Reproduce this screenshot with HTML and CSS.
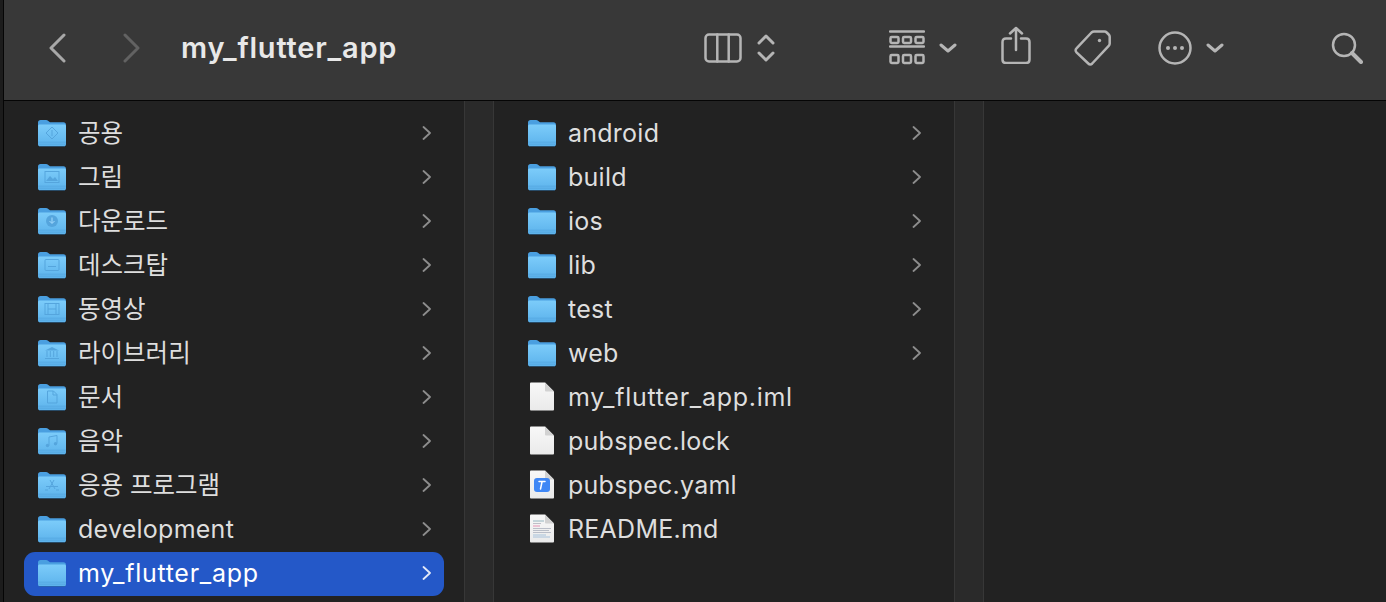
FILE: index.html
```html
<!DOCTYPE html>
<html lang="ko">
<head>
<meta charset="utf-8">
<title>my_flutter_app</title>
<link rel="stylesheet" href="styles.css">
</head>
<body>
<svg class="defs" width="0" height="0" aria-hidden="true">
  <defs>
    <linearGradient id="fb" x1="0" y1="0" x2="0" y2="1"><stop offset="0" stop-color="#7cccfa"/><stop offset="1" stop-color="#5db3ec"/></linearGradient>
    <linearGradient id="pg" x1="0" y1="0" x2="0" y2="1"><stop offset="0" stop-color="#f8f8f8"/><stop offset="1" stop-color="#eaeaea"/></linearGradient>
    <symbol id="folder" viewBox="0 0 28 28">
      <path d="M0 3.500C0 2 1 1 2.500 1H8c1 0 1.600.3 2.300.9L12 3.200h13.500C27 3.200 28 4.200 28 5.700V10H0z" fill="#4a9fe0"/>
      <path d="M0 7c0-1 .8-1.600 1.800-1.600h24.400C27.200 5.400 28 6 28 7v18.500c0 1-.8 1.500-1.800 1.500H1.800C.8 27 0 26.500 0 25.500z" fill="url(#fb)"/>
      <path d="M0 23.200h28M0 25.200h28" stroke="#4e9fd9" stroke-width=".7" opacity=".7"/>
      <path d="M1 27.400h26" stroke="#2f6d9e" stroke-width=".8" opacity=".8"/>
    </symbol>
    <symbol id="page" viewBox="0 0 28 30">
      <path d="M3.200.5C2.500.5 2 1 2 1.800v25.400c0 .8.5 1.300 1.200 1.300h21.600c.7 0 1.200-.5 1.200-1.300V9.500l-9-9z" fill="url(#pg)"/>
      <path d="M17 .5v7.700c0 .8.500 1.300 1.300 1.300H26z" fill="#d2d2d2"/>
    </symbol>
  </defs>
</svg>
<div class="window">
  <header class="toolbar">
    <svg class="tb back" width="18" height="30" viewBox="0 0 18 30"><path d="M16 2 3 15l13 13"/></svg>
    <svg class="tb fwd" width="18" height="30" viewBox="0 0 18 30"><path d="m2 2 13 13L2 28"/></svg>
    <h1 class="title">my_flutter_app</h1>
    <svg class="tb columns" width="38" height="30" viewBox="0 0 38 30"><rect x="1.500" y="1.500" width="35" height="27" rx="3.500"/><path d="M13.300 1.500v27M24.700 1.500v27"/></svg>
    <svg class="tb stepper" width="18" height="28" viewBox="0 0 18 28"><path d="m2 9 7-7 7 7M2 19l7 7 7-7" stroke-width="3"/></svg>
    <svg class="tb group" width="36" height="36" viewBox="0 0 36 36"><path d="M1 1.500h34M1 16.500h34"/><rect x="1.500" y="7" width="8" height="6" rx="1.200"/><rect x="14" y="7" width="8" height="6" rx="1.200"/><rect x="26.500" y="7" width="8" height="6" rx="1.200"/><rect x="1.500" y="25" width="8" height="8" rx="1.200"/><rect x="14" y="25" width="8" height="8" rx="1.200"/><rect x="26.500" y="25" width="8" height="8" rx="1.200"/></svg>
    <svg class="tb chev1" width="18" height="10" viewBox="0 0 18 10"><path d="m2 2 7 6 7-6" stroke-width="3"/></svg>
    <svg class="tb share" width="30" height="38" viewBox="0 0 30 38"><path d="M15 24V2M9 7.500 15 2l6 5.500M10 12.500H5c-2.300 0-3.500 1.200-3.500 3.500v17.500c0 2.300 1.200 3.500 3.500 3.500h20c2.300 0 3.500-1.200 3.500-3.500V16c0-2.300-1.200-3.500-3.500-3.500H20"/></svg>
    <svg class="tb tag" width="38" height="38" viewBox="0 0 38 38"><path d="M21 2.500h10.500c1 0 1.500.3 2.200 1l2 2c.7.7 1 1.300 1 2.200v6.800c0 1-.3 1.600-1 2.300L19.200 34.500c-1.200 1.200-2.700 1.200-3.900 0L3.500 23.300c-1.200-1.200-1.200-2.700 0-3.900L18.500 3.500c.8-.7 1.500-1 2.500-1z"/><circle cx="26.500" cy="11.500" r="1.700" class="dot"/></svg>
    <svg class="tb more" width="34" height="34" viewBox="0 0 34 34"><circle cx="17" cy="17" r="15.500"/><circle cx="10" cy="17" r="2" class="dot"/><circle cx="17" cy="17" r="2" class="dot"/><circle cx="24" cy="17" r="2" class="dot"/></svg>
    <svg class="tb chev2" width="18" height="10" viewBox="0 0 18 10"><path d="m2 2 7 6 7-6" stroke-width="3"/></svg>
    <svg class="tb search" width="32" height="32" viewBox="0 0 32 32"><circle cx="13" cy="13" r="11"/><path d="m21 21 9 9" stroke-width="4"/></svg>
  </header>
  <main class="browser">
    <section class="column">
      <ul class="list">
        <li class="row ko"><span class="ic"><svg width="28" height="28"><use href="#folder"/><g class="glyph"><path d="m14 8 6 6-6 6-6-6z"/><path d="M14 11v6"/></g></svg></span><span class="name">공용</span><svg class="arrow" width="10" height="14" viewBox="0 0 10 14"><path d="m1.500 1 6.500 6-6.500 6"/></svg></li>
        <li class="row ko"><span class="ic"><svg width="28" height="28"><use href="#folder"/><g class="glyph"><rect x="7" y="8.500" width="14" height="11"/><path d="m8 18 4-5 3 3 2-2 3 4z" class="fill"/></g></svg></span><span class="name">그림</span><svg class="arrow" width="10" height="14" viewBox="0 0 10 14"><path d="m1.500 1 6.500 6-6.500 6"/></svg></li>
        <li class="row ko"><span class="ic"><svg width="28" height="28"><use href="#folder"/><g class="glyph"><circle cx="14" cy="14" r="6" class="fill"/><path d="M14 10.500V16M11.500 14l2.500 2.500 2.500-2.500" class="lite"/></g></svg></span><span class="name">다운로드</span><svg class="arrow" width="10" height="14" viewBox="0 0 10 14"><path d="m1.500 1 6.500 6-6.500 6"/></svg></li>
        <li class="row ko"><span class="ic"><svg width="28" height="28"><use href="#folder"/><g class="glyph"><rect x="7" y="8.500" width="14" height="11" rx="1"/><path d="M10 15.500h8"/></g></svg></span><span class="name">데스크탑</span><svg class="arrow" width="10" height="14" viewBox="0 0 10 14"><path d="m1.500 1 6.500 6-6.500 6"/></svg></li>
        <li class="row ko"><span class="ic"><svg width="28" height="28"><use href="#folder"/><g class="glyph"><rect x="7" y="8.500" width="14" height="11"/><path d="M10 8.500v11M18 8.500v11M10 14h8"/></g></svg></span><span class="name">동영상</span><svg class="arrow" width="10" height="14" viewBox="0 0 10 14"><path d="m1.500 1 6.500 6-6.500 6"/></svg></li>
        <li class="row ko"><span class="ic"><svg width="28" height="28"><use href="#folder"/><g class="glyph"><path d="m14 8 7 3.500H7z" class="fill"/><path d="M9 12v6M12.300 12v6M15.700 12v6M19 12v6M7 19.500h14"/></g></svg></span><span class="name">라이브러리</span><svg class="arrow" width="10" height="14" viewBox="0 0 10 14"><path d="m1.500 1 6.500 6-6.500 6"/></svg></li>
        <li class="row ko"><span class="ic"><svg width="28" height="28"><use href="#folder"/><g class="glyph"><path d="M9.500 8h6l3.500 3.500V20H9.500zM15 8v4h4"/></g></svg></span><span class="name">문서</span><svg class="arrow" width="10" height="14" viewBox="0 0 10 14"><path d="m1.500 1 6.500 6-6.500 6"/></svg></li>
        <li class="row ko"><span class="ic"><svg width="28" height="28"><use href="#folder"/><g class="glyph"><path d="M11 18.500V10l8-1.500v8"/><circle cx="9.500" cy="18.500" r="1.700" class="fill"/><circle cx="17.500" cy="16.800" r="1.700" class="fill"/></g></svg></span><span class="name">음악</span><svg class="arrow" width="10" height="14" viewBox="0 0 10 14"><path d="m1.500 1 6.500 6-6.500 6"/></svg></li>
        <li class="row ko"><span class="ic"><svg width="28" height="28"><use href="#folder"/><g class="glyph"><path d="m11 18 5-9M17 18l-5-9M8 15.500h12M7 19h3M18 19h3"/></g></svg></span><span class="name">응용 프로그램</span><svg class="arrow" width="10" height="14" viewBox="0 0 10 14"><path d="m1.500 1 6.500 6-6.500 6"/></svg></li>
        <li class="row"><span class="ic"><svg width="28" height="28"><use href="#folder"/></svg></span><span class="name">development</span><svg class="arrow" width="10" height="14" viewBox="0 0 10 14"><path d="m1.500 1 6.500 6-6.500 6"/></svg></li>
        <li class="row selected"><span class="ic"><svg width="28" height="28"><use href="#folder"/></svg></span><span class="name wide">my_flutter_app</span><svg class="arrow" width="10" height="14" viewBox="0 0 10 14"><path d="m1.500 1 6.500 6-6.500 6"/></svg></li>
      </ul>
    </section>
    <div class="divider"></div>
    <section class="column">
      <ul class="list">
        <li class="row"><span class="ic"><svg width="28" height="28"><use href="#folder"/></svg></span><span class="name">android</span><svg class="arrow" width="10" height="14" viewBox="0 0 10 14"><path d="m1.500 1 6.500 6-6.500 6"/></svg></li>
        <li class="row"><span class="ic"><svg width="28" height="28"><use href="#folder"/></svg></span><span class="name">build</span><svg class="arrow" width="10" height="14" viewBox="0 0 10 14"><path d="m1.500 1 6.500 6-6.500 6"/></svg></li>
        <li class="row"><span class="ic"><svg width="28" height="28"><use href="#folder"/></svg></span><span class="name">ios</span><svg class="arrow" width="10" height="14" viewBox="0 0 10 14"><path d="m1.500 1 6.500 6-6.500 6"/></svg></li>
        <li class="row"><span class="ic"><svg width="28" height="28"><use href="#folder"/></svg></span><span class="name">lib</span><svg class="arrow" width="10" height="14" viewBox="0 0 10 14"><path d="m1.500 1 6.500 6-6.500 6"/></svg></li>
        <li class="row"><span class="ic"><svg width="28" height="28"><use href="#folder"/></svg></span><span class="name">test</span><svg class="arrow" width="10" height="14" viewBox="0 0 10 14"><path d="m1.500 1 6.500 6-6.500 6"/></svg></li>
        <li class="row"><span class="ic"><svg width="28" height="28"><use href="#folder"/></svg></span><span class="name">web</span><svg class="arrow" width="10" height="14" viewBox="0 0 10 14"><path d="m1.500 1 6.500 6-6.500 6"/></svg></li>
        <li class="row"><span class="ic"><svg width="28" height="30"><use href="#page"/></svg></span><span class="name wide">my_flutter_app.iml</span></li>
        <li class="row"><span class="ic"><svg width="28" height="30"><use href="#page"/></svg></span><span class="name">pubspec.lock</span></li>
        <li class="row"><span class="ic"><svg width="28" height="30"><use href="#page"/><rect x="6" y="8" width="16" height="14" rx="3" fill="#3f87f5"/><path d="M12.500 19 14 12M11 11.500h6" stroke="#fff" stroke-width="1.500" fill="none" stroke-linecap="round"/></svg></span><span class="name">pubspec.yaml</span></li>
        <li class="row"><span class="ic"><svg width="28" height="30"><use href="#page"/><g class="readme"><path d="M5 7h11" stroke="#6f9aa8"/><path d="M5 9.500h8" stroke="#a9a9b5"/><path d="M5 12h7" stroke="#e06a9c"/><path d="M5 14.500h18M5 16.500h16M5 18.500h18" stroke="#a3a9b8"/><path d="M5 21h13M5 23h17" stroke="#8bb0d4"/></g></svg></span><span class="name">README.md</span></li>
      </ul>
    </section>
    <div class="divider"></div>
    <section class="column rest"></section>
  </main>
</div>
</body>
</html>
```
FILE: styles.css
```css
* { box-sizing: border-box; }
html, body { margin: 0; padding: 0; height: 100%; overflow: hidden; background: #222; }
.defs { position: absolute; }
.window {
  width: 1386px; height: 602px; display: flex; flex-direction: column;
  border-left: 3px solid #1c1c1c;
  font-family: Inter, "Noto Sans CJK KR", "Liberation Sans", sans-serif;
}
.toolbar {
  height: 101px; flex: none; background: #383838;
  border-left: 1px solid #050505; border-bottom: 1px solid #050505;
  display: flex; align-items: center; padding-bottom: 4px;
}
.tb { flex: none; fill: none; stroke: #b5b5b5; stroke-width: 2.500; stroke-linecap: round; stroke-linejoin: round; }
.tb .dot { fill: #b5b5b5; stroke: none; }
.back { margin-left: 44px; stroke-width: 3; stroke: #a8a8a8; }
.fwd { margin-left: 57px; stroke-width: 3; stroke: #626262; }
.title { margin: -2px 0 0 40px; width: 523px; flex: none; font-size: 29px; font-weight: 600; color: #e8e8e8; letter-spacing: .8px; }
.stepper { margin-left: 15px; }
.group { margin-left: 114px; }
.chev1 { margin-left: 14px; }
.share { margin-left: 44px; margin-top: -6px; }
.tag { margin-left: 42px; }
.more { margin-left: 47px; }
.chev2 { margin-left: 14px; }
.search { margin-left: 107px; }
.browser { flex: 1; display: flex; min-height: 0; background: #222; border-left: 1px solid #050505; }
.column { width: 460px; flex: none; padding: 11px 20px 0; }
.rest { flex: 1; }
.divider { width: 30px; flex: none; background: #2a2a2a; border-left: 1px solid #373737; border-right: 1px solid #373737; }
.list { list-style: none; margin: 0; padding: 0; }
.row { height: 44px; display: flex; align-items: center; padding: 0 12px 2px 14px; border-radius: 11px; color: #dedede; font-size: 25px; line-height: 30px; }
.row.ko { font-size: 24.5px; }
.ic { width: 28px; height: 30px; display: flex; align-items: center; flex: none; margin-right: 12px; }
.ic svg { display: block; }
.name { flex: 1; white-space: nowrap; letter-spacing: .25px; }
.row.ko .name { letter-spacing: 0; }
.name.wide { letter-spacing: .72px; }
.arrow { flex: none; fill: none; stroke: #8d8d8d; stroke-width: 1.800; stroke-linecap: round; stroke-linejoin: round; }
.selected { background: #2458c8; color: #fff; }
.selected .arrow { stroke: #e3e9f8; }
.glyph { fill: none; stroke: #55a5dd; stroke-width: 1; }
.glyph .fill { fill: #55a5dd; stroke: none; }
.glyph .lite { stroke: #a5dcff; }
.readme { stroke-width: 1; opacity: .7; }
```
